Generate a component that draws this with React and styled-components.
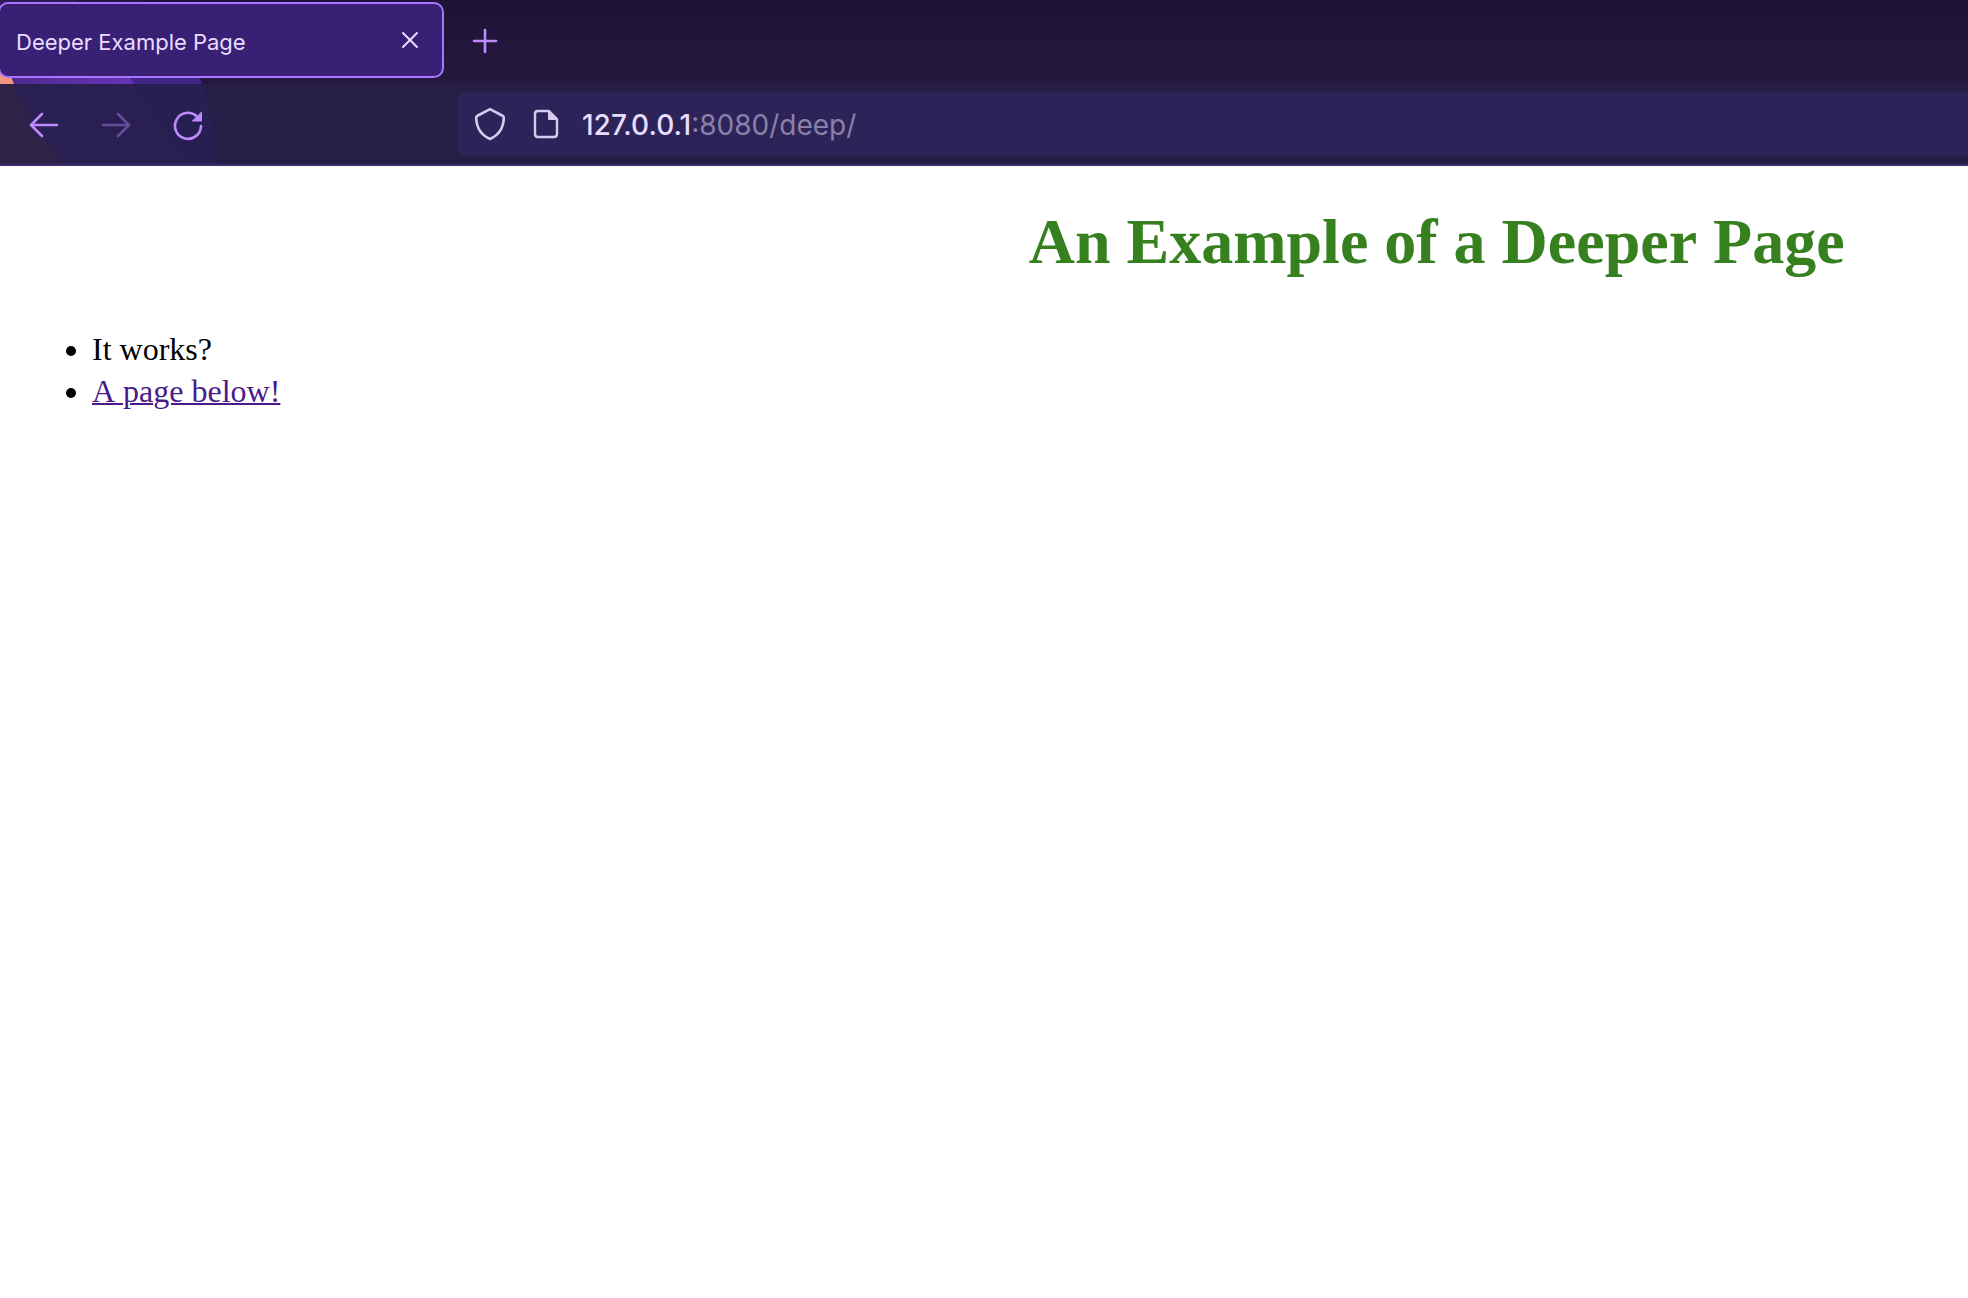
import React from "react";
import styled, { createGlobalStyle } from "styled-components";

const GlobalStyle = createGlobalStyle`
  *, *::before, *::after { box-sizing: border-box; }
  html, body { margin: 0; background: #ffffff; }
`;

const uiFont = `Inter, "Liberation Sans", sans-serif`;

const Chrome = styled.header`
  position: relative;
  isolation: isolate;
  background: linear-gradient(#1e1336, #24183f 84px);
  font-family: ${uiFont};
`;

const ThemeArt = styled.svg`
  position: absolute;
  top: 0;
  left: 0;
  z-index: -1;
`;

const TabStrip = styled.nav`
  display: flex;
  align-items: center;
  height: 84px;
  padding: 2px 0 6px;
`;

const Tab = styled.div`
  display: flex;
  align-items: center;
  justify-content: space-between;
  width: 446px;
  height: 76px;
  margin-left: -2px;
  padding: 0 16px;
  border: 2px solid #a974ff;
  border-radius: 10px;
  background: #392075;
`;

const PlainButton = styled.button`
  display: flex;
  align-items: center;
  justify-content: center;
  flex: none;
  padding: 0;
  border: 0;
  background: transparent;
  color: ${(p) => p.$color || "#bd8aff"};
  font: inherit;
`;

const TabTitle = styled(PlainButton)`
  padding-top: 4px;
  color: #e8dcff;
  font-size: 22px;
  line-height: 28px;
`;

const TabClose = styled(PlainButton)`
  width: 32px;
  height: 32px;
`;

const NewTab = styled(PlainButton)`
  width: 64px;
  height: 64px;
  margin-left: 9px;
  padding-top: 2px;
`;

const Toolbar = styled.div`
  display: flex;
  align-items: center;
  height: 82px;
  border-bottom: 2px solid #3b2d66;
  background: rgba(42, 36, 82, 0.5);
`;

const NavButtons = styled.div`
  display: flex;
  gap: 8px;
  width: 458px;
  padding-left: 12px;
  flex: none;
`;

const NavButton = styled(PlainButton)`
  width: 64px;
  height: 64px;
  padding-top: 2px;
  opacity: ${(p) => (p.disabled ? 0.42 : 1)};
`;

const AddressBar = styled.form`
  display: flex;
  align-items: center;
  flex: 1;
  min-width: 0;
  height: 64px;
  padding-left: 12px;
  border-radius: 8px 0 0 8px;
  background: #2c2458;
  font-size: 28px;
  line-height: 36px;
`;

const BarButton = styled(PlainButton)`
  width: 40px;
  height: 48px;
  margin-right: 16px;
`;

const Host = styled.label`
  padding-top: 2px;
  color: #e8dcff;
  font-weight: 500;
`;

const PathInput = styled.input`
  flex: 1;
  min-width: 0;
  padding: 2px 0 0;
  border: 0;
  outline: 0;
  background: transparent;
  color: #8b80a8;
  font: inherit;
`;

const Viewport = styled.main`
  overflow: hidden;
`;

/* The document is laid out wider than the visible part of the window. */
const Page = styled.div`
  width: 146vw;
  padding: 39px 16px;
  font-family: "Liberation Serif", "Times New Roman", serif;
  font-size: 32px;
  line-height: 42px;
  font-kerning: none;
  color: #000000;
`;

const Title = styled.h1`
  margin: 0 0 49px;
  color: #378020;
  font-size: 64px;
  line-height: 74px;
  text-align: center;
`;

const List = styled.ul`
  margin: 0;
  padding-left: 76px;
`;

const PageLink = styled.a`
  color: #4b1a8a;
  text-decoration: underline;
  text-decoration-thickness: 2px;
`;

const Icon = ({ size, children, width = 2 }) => (
  <svg
    width={size}
    height={size}
    viewBox={`0 0 ${size} ${size}`}
    fill="none"
    stroke="currentColor"
    strokeWidth={width}
    strokeLinecap="round"
    strokeLinejoin="round"
    aria-hidden="true"
  >
    {children}
  </svg>
);

export default function App() {
  return (
    <>
      <GlobalStyle />
      <Chrome>
        <ThemeArt width="240" height="166" viewBox="0 0 240 166" aria-hidden="true">
          <defs>
            <linearGradient id="violet">
              <stop offset="0" stopColor="#4c2a8c" />
              <stop offset="1" stopColor="#6633b8" />
            </linearGradient>
          </defs>
          <path d="M0 0 H143 L150 10 H0Z" fill="#25163f" />
          <path d="M0 0 H76 L83 10 H0Z" fill="#2d1a52" />
          <path d="M0 60 H193 L202 84 H0Z" fill="#41268a" />
          <path d="M0 60 H118 L134 84 H0Z" fill="url(#violet)" />
          <path d="M0 50 L14 84 H0Z" fill="#f39880" />
          <path d="M0 84 H202 Q214 120 217 166 H0Z" fill="#251850" />
          <path d="M0 84 H134 L189 166 H0Z" fill="#291a4e" />
          <path d="M0 84 H14 Q30 126 66 166 H0Z" fill="#33213f" />
        </ThemeArt>
        <TabStrip aria-label="Tabs">
          <Tab>
            <TabTitle type="button">Deeper Example Page</TabTitle>
            <TabClose type="button" $color="#e8dcff" aria-label="Close tab">
              <Icon size={18}>
                <path d="M2 2 L16 16 M16 2 L2 16" />
              </Icon>
            </TabClose>
          </Tab>
          <NewTab type="button" aria-label="New tab">
            <Icon size={26} width={2.6}>
              <path d="M13 2 V24 M2 13 H24" />
            </Icon>
          </NewTab>
        </TabStrip>
        <Toolbar>
          <NavButtons>
            <NavButton type="button" aria-label="Back">
              <Icon size={32} width={2.6}>
                <path d="M29 16 H3 M14 5 L3 16 L14 27" />
              </Icon>
            </NavButton>
            <NavButton type="button" disabled aria-label="Forward">
              <Icon size={32} width={2.6}>
                <path d="M3 16 H29 M18 5 L29 16 L18 27" />
              </Icon>
            </NavButton>
            <NavButton type="button" aria-label="Reload">
              <Icon size={32} width={2.6}>
                <path d="M29 17 A13 13 0 1 1 24.5 7" />
                <path
                  d="M29.5 3.4 V12 H20.6 Z"
                  fill="currentColor"
                  strokeWidth="1"
                />
              </Icon>
            </NavButton>
          </NavButtons>
          <AddressBar>
            <BarButton type="button" $color="#d6cbee" aria-label="Tracking protection">
              <Icon size={36} width={2.6}>
                <path d="M18 3.2 L31 10 Q32 10.6 31.8 12 C31.4 22 27 29 18 33 C9 29 4.6 22 4.2 12 Q4 10.6 5 10 Z" />
              </Icon>
            </BarButton>
            <BarButton type="button" $color="#d6cbee" aria-label="Site information">
              <Icon size={32} width={2.4}>
                <path d="M19 3 H8 Q5 3 5 6 V26 Q5 29 8 29 H24 Q27 29 27 26 V11 Z" />
                <path d="M18.5 3 V11.5 H27 Z" fill="currentColor" strokeWidth="1" />
              </Icon>
            </BarButton>
            <Host htmlFor="address">127.0.0.1</Host>
            <PathInput id="address" defaultValue=":8080/deep/" spellCheck={false} />
          </AddressBar>
        </Toolbar>
      </Chrome>
      <Viewport>
        <Page>
          <Title>An Example of a Deeper Page</Title>
          <List>
            <li>It works?</li>
            <li>
              <PageLink href="#below">A page below!</PageLink>
            </li>
          </List>
        </Page>
      </Viewport>
    </>
  );
}
